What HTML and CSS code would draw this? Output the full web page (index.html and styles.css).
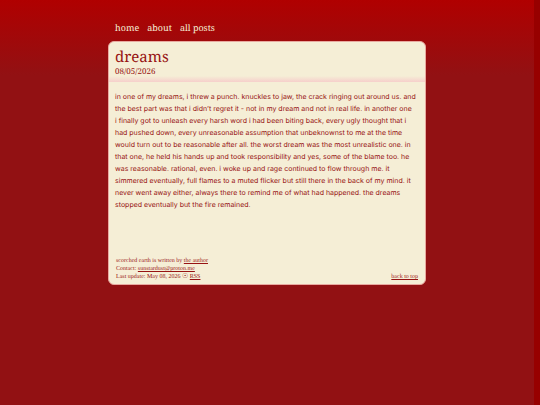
FILE: index.html
```html
<!DOCTYPE html>
<html lang="en">
<head>
  <meta charset="UTF-8">
  <meta name="viewport" content="width=device-width, initial-scale=1.0">
  <title>dreams</title>
  <link rel="stylesheet" href="styles.css">
</head>
<body id="top">
  <div class="wrapper">
    <nav class="menu">
      <a href="#">home</a>
      <a href="#">about</a>
      <a href="#">all posts</a>
    </nav>
    <main class="card">
      <header class="post-header">
        <h1>dreams</h1>
        <time datetime="2026-05-08">08/05/2026</time>
      </header>
      <article class="post">
        <p>
          in one of my dreams, i threw a punch. knuckles to jaw, the crack ringing out around us. and<br>
          the best part was that i didn’t regret it - not in my dream and not in real life. in another one<br>
          i finally got to unleash every harsh word i had been biting back, every ugly thought that i<br>
          had pushed down, every unreasonable assumption that unbeknownst to me at the time<br>
          would turn out to be reasonable after all. the worst dream was the most unrealistic one. in<br>
          that one, he held his hands up and took responsibility and yes, some of the blame too. he<br>
          was reasonable. rational, even. i woke up and rage continued to flow through me. it<br>
          simmered eventually, full flames to a muted flicker but still there in the back of my mind. it<br>
          never went away either, always there to remind me of what had happened. the dreams<br>
          stopped eventually but the fire remained.
        </p>
      </article>
      <footer class="footer">
        <div>
          <p>scorched earth is written by <a href="#">the author</a></p>
          <p>Contact: <a href="mailto:sunstardust@proton.me">sunstardust@proton.me</a></p>
          <p>Last update: May 08, 2026 <span class="sun">☉</span> <a href="#">RSS</a></p>
        </div>
        <a href="#top">back to top</a>
      </footer>
    </main>
  </div>
</body>
</html>
```

FILE: styles.css
```css
* {
  box-sizing: border-box;
}

body {
  margin: 0;
  min-height: 100vh;
  color: #971313;
  background: #921113 linear-gradient(#b00000, #921113 75px) no-repeat;
  border-right: 6px solid #970000;
  text-rendering: geometricPrecision;
}

a {
  color: inherit;
}

.wrapper {
  max-width: 318px;
  margin: 0 auto;
  padding-top: 21px;
}

.menu {
  display: flex;
  gap: 8px;
  padding: 0 7px;
  margin-bottom: 6px;
  font: 9px/14px "Noto Serif", "Droid Serif", "Liberation Serif", serif;
}

.menu a {
  color: #f5eed6;
  text-decoration: none;
}

.card {
  background: #f5eed6;
  border: 1px solid #e9a9a0;
  border-radius: 6px;
  overflow: hidden;
}

.post-header {
  padding: 5px 6px;
  font-family: "Noto Serif", "Droid Serif", "Liberation Serif", serif;
  background: linear-gradient(transparent, #f6cfcb) bottom / 100% 6px no-repeat;
}

.post-header h1 {
  margin: 0;
  font-size: 15px;
  line-height: 20px;
  font-weight: normal;
}

.post-header time {
  display: block;
  font-size: 8px;
  line-height: 10px;
}

.post {
  padding: 9px 6px 46px;
  font: 7px/12px Inter, Roboto, "Liberation Sans", sans-serif;
}

.post p {
  margin: 0;
}

.footer {
  display: flex;
  justify-content: space-between;
  align-items: flex-end;
  padding: 0 7px 3px;
  font: 6px/8px "Liberation Serif", serif;
}

.footer p {
  margin: 0;
}

.sun {
  font: 7px/6px "DejaVu Sans", sans-serif;
}
```
